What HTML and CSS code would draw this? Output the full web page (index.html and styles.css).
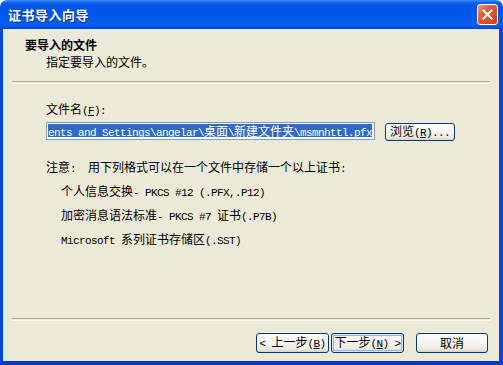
FILE: index.html
```html
<!DOCTYPE html>
<html lang="zh-CN">
<head>
    <meta charset="UTF-8">
    <meta name="viewport" content="width=device-width, initial-scale=1.0">
    <title>证书导入向导</title>
    <link rel="stylesheet" href="styles.css">
</head>
<body>
    <div class="window">
        <div class="titlebar">
            <span class="title">证书导入向导</span>
            <span class="close-btn">
                <svg width="11" height="11" viewBox="0 0 11 11">
                    <path d="M1.5 1.5 L9.5 9.5 M9.5 1.5 L1.5 9.5" stroke="#fff" stroke-width="2" stroke-linecap="square"/>
                </svg>
            </span>
        </div>
        <div class="frame">
            <div class="wizard-header">
                <div class="header-title">要导入的文件</div>
                <div class="header-sub">指定要导入的文件。</div>
            </div>
            <div class="divider top-divider"></div>

            <div class="wizard-body">
                <label class="field-label" for="file">文件名<span class="en">(<u>F</u>):</span></label>
                <div class="file-row">
                    <div class="file-input" id="file">
                        <!-- field is scrolled to the end, only the tail of the path shows -->
                        <span class="selected"><span class="en">ents and Settings\angelar\</span>桌面<span class="en">\</span>新建文件夹<span class="en">\msmnhttl.pfx</span></span>
                    </div>
                    <button class="xp-btn browse">浏览<span class="en">(<u>R</u>)...</span></button>
                </div>
                <p class="note"><span class="note-head">注意<span class="en">:</span></span>用下列格式可以在一个文件中存储一个以上证书<span class="en">:</span></p>
                <ul class="formats">
                    <li>个人信息交换<span class="en">- PKCS #12 (.PFX,.P12)</span></li>
                    <li>加密消息语法标准<span class="en">- PKCS #7 </span>证书<span class="en">(.P7B)</span></li>
                    <li><span class="en">Microsoft </span>系列证书存储区<span class="en">(.SST)</span></li>
                </ul>
            </div>

            <div class="divider"></div>
            <div class="wizard-footer">
                <button class="xp-btn"><span class="en">&lt; </span>上一步<span class="en">(<u>B</u>)</span></button>
                <button class="xp-btn default">下一步<span class="en">(<u>N</u>) &gt;</span></button>
                <button class="xp-btn cancel">取消</button>
            </div>
        </div>
    </div>
</body>
</html>
```

FILE: styles.css
```css
body {
    margin: 0;
    padding: 0;
    background-color: #ffffff;
    font-family: "Noto Sans CJK SC", sans-serif;
    font-size: 12px;
    color: #000;
}
.window {
    width: 503px;
    height: 365px;
    display: flex;
    flex-direction: column;
}
.titlebar {
    height: 29px;
    flex: none;
    display: flex;
    align-items: center;
    justify-content: space-between;
    padding: 0 5px 0 8px;
    box-sizing: border-box;
    border-radius: 7px 7px 0 0;
    background: linear-gradient(#3d8cf5 0, #0a5ff0 3px, #0155e8 6px, #0056ea 50%, #0260f3 85%, #0054e6 93%, #0043cf 100%);
}
.title {
    color: #fff;
    font-weight: bold;
    font-size: 13px;
    text-shadow: 1px 1px 0 #0a2a9a;
    letter-spacing: 0.5px;
}
.close-btn {
    width: 19px;
    height: 19px;
    border: 1px solid #fff;
    border-radius: 3px;
    display: flex;
    align-items: center;
    justify-content: center;
    background: linear-gradient(135deg, #f09a7c 0%, #e2603c 35%, #cf3d18 100%);
}
.frame {
    flex: 1;
    display: flex;
    flex-direction: column;
    background-color: #ece9d8;
    border-left: 3px solid #0748d8;
    border-right: 4px solid #0748d8;
    border-bottom: 4px solid #0639c4;
}
.en {
    font-family: "Liberation Mono", monospace;
    font-size: 11px;
    letter-spacing: -0.6px;
}
.wizard-header {
    padding: 8px 0 0 22px;
    line-height: 16px;
}
.header-title {
    font-weight: bold;
}
.header-sub {
    margin-top: 1px;
    padding-left: 21px;
}
.divider {
    height: 1px;
    margin: 0 9px;
    border-top: 1px solid #aca899;
    border-bottom: 1px solid #ffffff;
}
.top-divider {
    margin-top: 11px;
}
.wizard-body {
    flex: 1;
    padding: 17px 0 0 43px;
}
.field-label {
    display: block;
    line-height: 16px;
}
.file-row {
    display: flex;
    align-items: flex-start;
    gap: 10px;
    margin-top: 3px;
}
.file-input {
    width: 329px;
    height: 18px;
    box-sizing: border-box;
    border: 1px solid #7f9db9;
    background: #fff;
    display: flex;
    align-items: flex-start;
    white-space: nowrap;
    padding: 1px 1px 0 1px;
}
.selected {
    background-color: #316ac5;
    color: #fff;
    line-height: 13px;
    height: 13px;
}
.xp-btn {
    font-family: "Noto Sans CJK SC", sans-serif;
    font-size: 12px;
    color: #000;
    height: 20px;
    padding: 0;
    border: 1px solid #003c74;
    border-radius: 3px;
    background: linear-gradient(#ffffff 0%, #f4f3ee 50%, #ebe8dd 85%, #d6d0c5 100%);
    line-height: 16px;
    white-space: nowrap;
}
.browse {
    width: 70px;
    height: 18px;
    margin-top: 1px;
    line-height: 14px;
}
.note {
    margin: 18px 0 0 0;
    line-height: 16px;
}
.note-head {
    margin-right: 12px;
}
.formats {
    list-style: none;
    margin: 3px 0 0 0;
    padding: 0 0 0 15px;
}
.formats li {
    line-height: 22px;
}
.wizard-footer {
    display: flex;
    justify-content: flex-end;
    gap: 2px;
    padding: 12px 11px 8px 0;
}
.wizard-footer .xp-btn {
    width: 73px;
}
.xp-btn.default {
    box-shadow: inset 0 0 0 1px #cee7ff, inset 0 0 0 2px #98b8ea;
}
.xp-btn.cancel {
    width: 72px;
    margin-left: 10px;
}
```
